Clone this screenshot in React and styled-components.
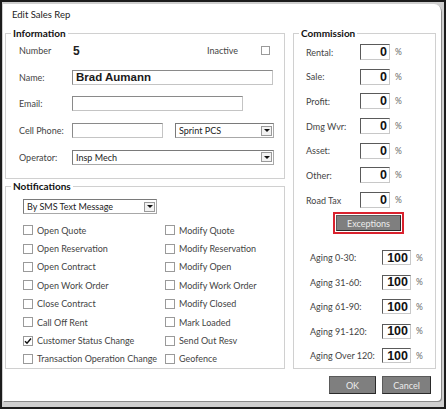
import React from 'react';
import styled, { createGlobalStyle } from 'styled-components';

const GlobalStyle = createGlobalStyle`
  body {
    margin: 0;
    font-family: Lato, "Noto Sans", sans-serif;
    color: #3a3a3a;
  }
`;

const Frame = styled.div`
  width: 446px;
  height: 409px;
  box-sizing: border-box;
  border: 2px solid #1c1c1c;
  background: #cfcfcf;
  padding: 2px 3px 6px 1px;
  display: flex;
`;

const Dialog = styled.div`
  flex: 1;
  background: #fff;
  border-radius: 0 7px 4px 0;
  box-shadow: 1px 1px 0 #8a8a8a;
  display: flex;
  flex-direction: column;
  padding: 0 5px 0 2px;
`;

const Title = styled.div`
  height: 23px;
  line-height: 22px;
  padding-left: 7px;
  font-size: 9.5px;
  color: #222;
`;

const Body = styled.div`
  display: grid;
  grid-template-columns: 280px 143px;
  column-gap: 8px;
`;

const LeftCol = styled.div`
  display: flex;
  flex-direction: column;
  gap: 1px;
`;

const Group = styled.fieldset`
  margin: 0;
  padding: 0;
  border: 1px solid #d0d0d0;
  min-width: 0;
  box-sizing: border-box;
  height: ${p => p.$h}px;
`;

const Legend = styled.legend`
  margin-left: 5px;
  padding: 0 2px;
  font-size: 10px;
  line-height: 13px;
  font-weight: 700;
  color: #111;
`;

const InfoBody = styled.div`
  display: flex;
  flex-direction: column;
  gap: 11.7px;
  padding: 3px 10px 0 13px;
`;

const FormRow = styled.div`
  display: flex;
  align-items: center;
  height: 15px;
`;

const Label = styled.span`
  width: ${p => p.$w || 53}px;
  margin-left: ${p => (p.$push ? 'auto' : '0')};
  flex: none;
  font-size: 9px;
  color: #444;
  white-space: nowrap;
`;

const NumberValue = styled.span`
  font-family: "Liberation Sans", Arial, sans-serif;
  font-weight: 700;
  font-size: 12px;
  color: #222;
  margin-left: 1px;
`;

const TextBox = styled.div`
  width: ${p => p.$w}px;
  height: 15px;
  box-sizing: border-box;
  border: 1px solid #c4c4c4;
  border-top-color: #8a8a8a;
  border-left-color: #8a8a8a;
  padding-left: 3px;
  display: flex;
  align-items: center;
  font-family: "Liberation Sans", Arial, sans-serif;
  font-weight: 700;
  font-size: 11.5px;
  color: #1a1a1a;
`;

const SelectBox = styled.div`
  width: ${p => p.$w}px;
  height: 15px;
  margin-left: ${p => p.$ml || 0}px;
  box-sizing: border-box;
  border: 1px solid #a8a8a8;
  border-top-color: #7a7a7a;
  border-left-color: #7a7a7a;
  display: flex;
  align-items: center;
  padding: 0 1px 0 3px;
  font-size: 9px;
  color: #222;
`;

const SelectText = styled.span`
  flex: 1;
`;

const DropButton = styled.div`
  width: 11px;
  height: 10px;
  box-sizing: border-box;
  border: 1px solid #9a9a9a;
  background: #f2f2f2;
  display: flex;
  align-items: center;
  justify-content: center;
`;

const Arrow = styled.div`
  width: 0;
  height: 0;
  border-left: 3px solid transparent;
  border-right: 3px solid transparent;
  border-top: 3px solid #111;
`;

const Box = styled.div`
  width: ${p => p.$s || 10}px;
  height: ${p => p.$s || 10}px;
  margin-right: ${p => p.$mr || 0}px;
  box-sizing: border-box;
  border: 1px solid #9a9a9a;
  background: #fff;
  flex: none;
  display: flex;
  align-items: center;
  justify-content: center;
`;

const NotifBody = styled.div`
  padding: 6px 0 0 17px;
`;

const CheckGrid = styled.div`
  display: grid;
  grid-template-columns: 142px 1fr;
  grid-auto-rows: 18.4px;
  margin-top: 7px;
`;

const CheckItem = styled.div`
  display: flex;
  align-items: center;
  gap: 4px;
  font-size: 9px;
  color: #444;
  white-space: nowrap;
`;

const CommBody = styled.div`
  display: flex;
  flex-direction: column;
  padding: 4px 0 0 12px;
`;

const RateRow = styled.div`
  display: flex;
  align-items: center;
  height: ${p => p.$h}px;
  margin-bottom: ${p => p.$gap}px;
  padding-left: ${p => p.$indent || 0}px;
`;

const RateInput = styled.div`
  width: ${p => p.$w}px;
  height: ${p => p.$h}px;
  box-sizing: border-box;
  border: 1px solid #c8c8c8;
  border-top-color: #5a5a5a;
  border-left-color: #5a5a5a;
  display: flex;
  align-items: center;
  justify-content: flex-end;
  padding-right: 2px;
  font-family: "Liberation Sans", Arial, sans-serif;
  font-weight: 700;
  font-size: 12.5px;
  color: #111;
`;

const Pct = styled.span`
  margin-left: 5px;
  font-size: 8.5px;
  color: #666;
`;

const Highlight = styled.div`
  align-self: flex-start;
  margin: 1px 0 16px 27px;
  border: 2px solid #d9222e;
  padding: 1px;
`;

const GrayButton = styled.div`
  width: ${p => p.$w}px;
  height: ${p => p.$h}px;
  box-sizing: border-box;
  background: #7f7f7f;
  border: 1px solid #5a5a5a;
  border-right-color: #2a2a2a;
  border-bottom-color: #2a2a2a;
  display: flex;
  align-items: center;
  justify-content: center;
  font-size: 9px;
  color: #ececec;
`;

const Footer = styled.div`
  display: flex;
  justify-content: flex-end;
  gap: 6px;
  margin-top: 7px;
  padding-right: 5px;
`;

const Check = () => (
  <svg width="8" height="8" viewBox="0 0 8 8">
    <path d="M1 4.2 L3 6.3 L7 1.5" fill="none" stroke="#111" strokeWidth="1.4" />
  </svg>
);

const Select = ({ w, ml, children }) => (
  <SelectBox $w={w} $ml={ml}>
    <SelectText>{children}</SelectText>
    <DropButton><Arrow /></DropButton>
  </SelectBox>
);

const leftChecks = [
  ['Open Quote', false],
  ['Open Reservation', false],
  ['Open Contract', false],
  ['Open Work Order', false],
  ['Close Contract', false],
  ['Call Off Rent', false],
  ['Customer Status Change', true],
  ['Transaction Operation Change', false],
];

const rightChecks = [
  'Modify Quote',
  'Modify Reservation',
  'Modify Open',
  'Modify Work Order',
  'Modify Closed',
  'Mark Loaded',
  'Send Out Resv',
  'Geofence',
];

const commission = ['Rental:', 'Sale:', 'Profit:', 'Dmg Wvr:', 'Asset:', 'Other:', 'Road Tax'];
const aging = ['Aging 0-30:', 'Aging 31-60:', 'Aging 61-90:', 'Aging 91-120:', 'Aging Over 120:'];

export default function App() {
  const checkCells = [];
  leftChecks.forEach(([label, checked], i) => {
    checkCells.push(
      <CheckItem key={`l${i}`}>
        <Box>{checked && <Check />}</Box>
        {label}
      </CheckItem>
    );
    checkCells.push(
      <CheckItem key={`r${i}`}>
        <Box />
        {rightChecks[i]}
      </CheckItem>
    );
  });

  return (
    <>
      <GlobalStyle />
      <Frame>
        <Dialog>
          <Title>Edit Sales Rep</Title>
          <Body>
            <LeftCol>
              <Group $h={152}>
                <Legend>Information</Legend>
                <InfoBody>
                  <FormRow>
                    <Label>Number</Label>
                    <NumberValue>5</NumberValue>
                    <Label $w={54} $push>Inactive</Label>
                    <Box $s={9} $mr={4} />
                  </FormRow>
                  <FormRow>
                    <Label>Name:</Label>
                    <TextBox $w={201}>Brad Aumann</TextBox>
                  </FormRow>
                  <FormRow>
                    <Label>Email:</Label>
                    <TextBox $w={171} />
                  </FormRow>
                  <FormRow>
                    <Label>Cell Phone:</Label>
                    <TextBox $w={91} />
                    <Select w={99} ml={12}>Sprint PCS</Select>
                  </FormRow>
                  <FormRow>
                    <Label>Operator:</Label>
                    <Select w={202}>Insp Mech</Select>
                  </FormRow>
                </InfoBody>
              </Group>
              <Group $h={189}>
                <Legend>Notifications</Legend>
                <NotifBody>
                  <Select w={134}>By SMS Text Message</Select>
                  <CheckGrid>{checkCells}</CheckGrid>
                </NotifBody>
              </Group>
            </LeftCol>
            <Group $h={342}>
              <Legend>Commission</Legend>
              <CommBody>
                {commission.map((c, i) => (
                  <RateRow key={c} $h={16} $gap={i === commission.length - 1 ? 3 : 8.7}>
                    <Label $w={54}>{c}</Label>
                    <RateInput $w={30} $h={16}>0</RateInput>
                    <Pct>%</Pct>
                  </RateRow>
                ))}
                <Highlight>
                  <GrayButton $w={65} $h={16}>Exceptions</GrayButton>
                </Highlight>
                {aging.map(a => (
                  <RateRow key={a} $h={15} $gap={9.5} $indent={4}>
                    <Label $w={72}>{a}</Label>
                    <RateInput $w={29} $h={15}>100</RateInput>
                    <Pct>%</Pct>
                  </RateRow>
                ))}
              </CommBody>
            </Group>
          </Body>
          <Footer>
            <GrayButton $w={47} $h={18}>OK</GrayButton>
            <GrayButton $w={49} $h={18}>Cancel</GrayButton>
          </Footer>
        </Dialog>
      </Frame>
    </>
  );
}
